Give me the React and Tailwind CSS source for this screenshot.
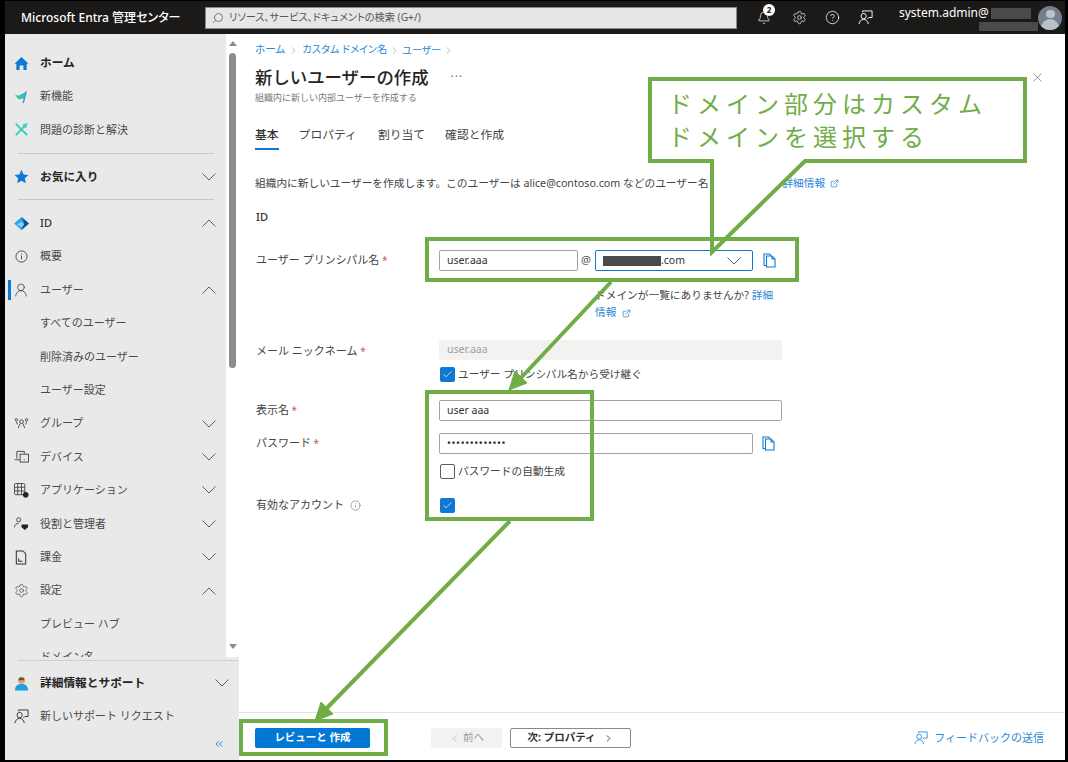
import React from "react";
import {Bell, Settings, CircleHelp, X, Check, Info, ExternalLink, UserRound, ChevronLeft, ChevronRight, ChevronsLeft, Search} from "lucide-react";

const Chevron = ({up}) => (
    <svg width="14" height="8" viewBox="0 0 14 8" fill="none" stroke="#605e5c" strokeWidth="1">
        <polyline points={up ? "0.5,7.5 7,1 13.5,7.5" : "0.5,0.5 7,7 13.5,0.5"}/>
    </svg>
);

const HomeIcon = () => (
    <svg width="15" height="15" viewBox="0 0 16 16"><path d="M8 1 15.5 8.2H13.5V15H10V10H6V15H2.5V8.2H.5Z" fill="#0f78d4"/></svg>
);
const NewIcon = () => (
    <svg width="14" height="14" viewBox="0 0 16 16">
        <path d="M1 5 5 6.5 14 2 11 10 5 10.5Z" fill="#32c8a8"/>
        <path d="M14 1.500 10.500 15" stroke="#2f8fe0" strokeWidth="1.500"/>
    </svg>
);
const ToolsIcon = () => (
    <svg width="15" height="15" viewBox="0 0 16 16" fill="none" stroke="#36d1bd" strokeWidth="2.200">
        <path d="M2 2 14 14"/>
        <path d="M14 1.500 2 14"/>
        <path d="M10 2.500 13 6"/>
    </svg>
);
const StarIcon = () => (
    <svg width="15" height="15" viewBox="0 0 16 16"><path d="M8 .8 10.200 5.800 15.500 6.300 11.500 9.900 12.700 15.200 8 12.400 3.300 15.200 4.500 9.900.5 6.300 5.800 5.800Z" fill="#0f78d4"/></svg>
);
const IdIcon = () => (
    <svg width="15" height="13" viewBox="0 0 16 14">
        <path d="M8 0 16 7 8 14 0 7Z" fill="#2aa5e8"/>
        <path d="M8 0 16 7 8 14 11 7Z" fill="#0a4d9e"/>
        <path d="M3 8 8 5 11 8 8 11Z" fill="#7fd4f5"/>
    </svg>
);
const InfoCircle = () => (
    <svg width="13" height="13" viewBox="0 0 14 14" fill="none" stroke="#444" strokeWidth="1">
        <circle cx="7" cy="7" r="6"/>
        <path d="M7 6v4M7 3.800v1" stroke="#a4262c"/>
    </svg>
);
const GroupIcon = () => (
    <svg width="15" height="13" viewBox="0 0 16 14" fill="none" stroke="#444" strokeWidth="1">
        <circle cx="8" cy="5" r="2"/>
        <circle cx="2.500" cy="3" r="1.300"/>
        <circle cx="13.500" cy="3" r="1.300"/>
        <path d="M4.500 12 6.500 7M11.500 12 9.500 7M2.500 5 3.500 8M13.500 5 12.500 8"/>
    </svg>
);
const DeviceIcon = () => (
    <svg width="15" height="13" viewBox="0 0 16 14" fill="none" stroke="#444" strokeWidth="1">
        <path d="M3 9V1.500H11V4"/>
        <path d="M.5 10.500H6"/>
        <rect x="6.500" y="4.500" width="9" height="8.500" fill="#e9e9e9"/>
        <path d="M10.500 10.500h1"/>
    </svg>
);
const AppsIcon = () => (
    <svg width="15" height="15" viewBox="0 0 16 16" fill="none" stroke="#444" strokeWidth="1">
        <rect x=".5" y=".5" width="11" height="12" rx="1.500"/>
        <path d="M4 .5v12M8 .5v12M.5 4.500h11M.5 8.500h11"/>
        <circle cx="12.500" cy="12.500" r="3" fill="#222" stroke="none"/>
    </svg>
);
const RoleIcon = () => (
    <svg width="15" height="14" viewBox="0 0 16 15" fill="none" stroke="#444" strokeWidth="1">
        <circle cx="5" cy="3" r="2.200"/>
        <path d="M.5 11c0-3 2-4 4.500-4"/>
        <path d="M8 8h7v3l-3.500 3L8 11Z" fill="#222" stroke="none"/>
    </svg>
);
const BillIcon = () => (
    <svg width="12" height="15" viewBox="0 0 12 16" fill="none" stroke="#333" strokeWidth="1.100">
        <path d="M1 1H8L11 4V15H1Z"/>
        <path d="M3.500 9v3h4"/>
    </svg>
);
const SupportIcon = () => (
    <svg width="15" height="15" viewBox="0 0 16 16">
        <circle cx="8" cy="4.500" r="3.800" fill="#e8a25a"/>
        <path d="M1 15.500c0-5 3-7 7-7s7 2 7 7Z" fill="#1ba1e2"/>
        <path d="M5 4.500a3 3 0 0 1 6 0Z" fill="#555"/>
    </svg>
);
const FeedbackIcon = ({color, size}) => (
    <svg width={size} height={size} viewBox="0 0 16 16" fill="none" stroke={color} strokeWidth="1">
        <circle cx="6" cy="6.500" r="2.800"/>
        <path d="M1 15c.5-3 2.500-5 5-5s4.500 2 5 5"/>
        <path d="M5 2.500V1H15V8H11.500L10 9.500"/>
    </svg>
);
const CopyIcon = () => (
    <svg width="13" height="15" viewBox="0 0 13 15" fill="none" stroke="#0f78d4" strokeWidth="1.100">
        <path d="M3.500 12.500H1V1H6.500L8 2.500"/>
        <path d="M3.500 3H9L12 6V14H3.500Z" fill="#fff"/>
        <path d="M9 3V6H12"/>
    </svg>
);

const topItems = [
    {label: "ホーム", icon: <HomeIcon/>, bold: true},
    {label: "新機能", icon: <NewIcon/>},
    {label: "問題の診断と解決", icon: <ToolsIcon/>},
    {divider: true},
    {label: "お気に入り", icon: <StarIcon/>, bold: true, chevron: "down"},
    {divider: true},
    {label: "ID", icon: <IdIcon/>, chevron: "up", strong: true},
    {label: "概要", icon: <InfoCircle/>},
    {label: "ユーザー", icon: <UserRound size={16} strokeWidth={1.1} color="#333"/>, chevron: "up", active: true},
    {label: "すべてのユーザー"},
    {label: "削除済みのユーザー"},
    {label: "ユーザー設定"},
    {label: "グループ", icon: <GroupIcon/>, chevron: "down"},
    {label: "デバイス", icon: <DeviceIcon/>, chevron: "down"},
    {label: "アプリケーション", icon: <AppsIcon/>, chevron: "down"},
    {label: "役割と管理者", icon: <RoleIcon/>, chevron: "down"},
    {label: "課金", icon: <BillIcon/>, chevron: "down"},
    {label: "設定", icon: <Settings size={15} strokeWidth={1} color="#333"/>, chevron: "up"},
    {label: "プレビュー ハブ"},
    {label: "ドメイン名"},
];

const NavRow = ({item}) => (
    <div className="flex items-center h-[33.4px] shrink-0 pl-[3px]">
        <div className={`w-[3px] h-[20px] ${item.active ? "bg-[#0f78d4]" : ""}`}/>
        <div className="w-[16px] ml-[2px] flex justify-center items-center">{item.icon}</div>
        <span className={`ml-[11px] whitespace-nowrap ${item.bold ? "text-[11.7px] font-bold text-[#252423]" : item.strong ? "text-[11px] font-medium text-[#323130]" : "text-[11px] text-[#4a4a4a]"}`}>
            {item.label}
        </span>
        {item.chevron && <div className="ml-auto mr-[10px] flex"><Chevron up={item.chevron === "up"}/></div>}
    </div>
);

const Sidebar = () => (
    <aside className="w-[234px] shrink-0 flex flex-col bg-[#e9e9e9]">
        <div className="flex h-[623px] shrink-0">
            <div className="w-[221px] pt-[12.5px] overflow-hidden flex flex-col">
                {topItems.map((item, i) =>
                    item.divider
                        ? <div key={i} className="h-[13.25px] shrink-0 flex items-center pl-[13px] pr-[12px]"><div className="h-px w-full bg-[#c8c8c8]"/></div>
                        : <NavRow key={i} item={item}/>
                )}
            </div>
            <div className="w-[13px] bg-white flex flex-col items-center">
                <div className="mt-[7px] w-0 h-0 border-x-[4px] border-x-transparent border-b-[5px] border-b-[#8c8c8c]"/>
                <div className="mt-[7px] w-[7px] h-[315px] rounded-[4px] bg-[#8c8c8c]"/>
                <div className="mt-auto mb-[8px] w-0 h-0 border-x-[4px] border-x-transparent border-t-[5px] border-t-[#8c8c8c]"/>
            </div>
        </div>
        <div className="flex-1 flex flex-col">
            <div className="mt-[3px] ml-[13px] mr-px h-px bg-[#cfcfcf]"/>
            <div className="mt-[5.5px] flex items-center h-[33.4px] pl-[6px]">
                <div className="w-[20px] flex justify-center"><SupportIcon/></div>
                <span className="ml-[9px] text-[11.7px] font-bold text-[#252423]">詳細情報とサポート</span>
                <div className="ml-auto mr-[10px] flex"><Chevron/></div>
            </div>
            <div className="flex items-center h-[33.4px] pl-[6px]">
                <div className="w-[20px] flex justify-center"><FeedbackIcon color="#333" size={15}/></div>
                <span className="ml-[9px] text-[11px] text-[#4a4a4a]">新しいサポート リクエスト</span>
            </div>
            <div className="mt-[5px] mr-[14px] flex justify-end">
                <ChevronsLeft size={12} strokeWidth={1.8} color="#0f78d4"/>
            </div>
        </div>
    </aside>
);

const Header = () => (
    <header className="h-[33px] shrink-0 bg-[#1b1a19] flex items-center">
        <span className="ml-[16px] w-[184px] text-[12px] font-medium text-white whitespace-nowrap [font-feature-settings:'palt']">Microsoft Entra 管理センター</span>
        <div className="w-[532px] h-[22px] bg-[#e6e6e6] border border-[#8a8a8a] flex items-center pl-[6px]">
            <Search size={12} strokeWidth={1.3} color="#444" className="-scale-x-100"/>
            <span className="ml-[5px] text-[10.2px] text-[#555] [font-feature-settings:'palt']">リソース、サービス、ドキュメントの検索 (G+/)</span>
        </div>
        <div className="ml-[20px] w-[14px] relative flex">
            <Bell size={14} strokeWidth={1.2} color="#fff"/>
            <div className="absolute -top-[7px] left-[6px] w-[12px] h-[12px] rounded-full bg-white text-[8px] font-bold leading-[12px] text-center text-[#222]">2</div>
        </div>
        <Settings size={15} strokeWidth={1.1} color="#fff" className="ml-[21px]"/>
        <CircleHelp size={15} strokeWidth={1.2} color="#fff" className="ml-[18px]"/>
        <div className="ml-[18px] flex"><FeedbackIcon color="#fff" size={15}/></div>
        <div className="ml-[26px] w-[139px] h-full flex flex-col">
            <div className="mt-[5px] flex h-[14px] items-center">
                <span className="text-[12px] text-white leading-[14px] whitespace-nowrap">system.admin@</span>
                <div className="ml-[2px] w-[40px] h-[11px] bg-[#4a4a4a]"/>
            </div>
            <div className="mt-[2px] ml-[80px] w-[59px] h-[9px] bg-[#4a4a4a]"/>
        </div>
        <div className="w-[24px] h-[24px] rounded-full bg-[#73808c] overflow-hidden flex flex-col items-center">
            <div className="mt-[4px] w-[9px] h-[9px] rounded-full bg-[#b9c2c9]"/>
            <div className="mt-[1px] w-[18px] h-[12px] rounded-t-full bg-[#b9c2c9]"/>
        </div>
    </header>
);

const Label = ({children, star, className}) => (
    <div className={`w-[183px] shrink-0 text-[11px] text-[#444] ${className || ""}`}>
        {children}{star && <span className="text-[#c4605f] text-[10px]"> *</span>}
    </div>
);

const Input = ({value, className}) => (
    <div className={`h-[21px] border-[1.5px] border-[#a3a3a3] rounded-[2px] flex items-center pl-[7px] text-[10.5px] text-[#323130] ${className}`}>{value}</div>
);

const Checkbox = ({checked}) => (
    <div className={`w-[15px] h-[15px] shrink-0 rounded-[2px] flex items-center justify-center ${checked ? "bg-[#0f78d4]" : "border-[1.5px] border-[#605e5c]"}`}>
        {checked && <Check size={11} strokeWidth={1.5} color="#fff"/>}
    </div>
);

const Overlay = () => (
    <>
        <svg className="absolute inset-0 pointer-events-none" width="1068" height="762" viewBox="0 0 1068 762" fill="none" stroke="#70ad47" strokeWidth="4">
            <path d="M650 79H1025V161H805L712 252V161H650Z" fill="#fff"/>
            <rect x="427" y="239" width="370" height="41"/>
            <rect x="427" y="392" width="165" height="127"/>
            <rect x="241" y="721" width="145" height="33"/>
            <path d="M611 282 518 381"/>
            <path d="M509 390 527 383 515 371Z" fill="#70ad47" strokeWidth="1"/>
            <path d="M510 521 324 711"/>
            <path d="M315 721 333 714 321 702Z" fill="#70ad47" strokeWidth="1"/>
        </svg>
        <div className="absolute left-[668px] top-[87px] text-[24px] leading-[33px] tracking-[5px] font-normal text-[#70ad47] whitespace-nowrap">
            <div>ドメイン部分はカスタム</div>
            <div>ドメインを選択する</div>
        </div>
    </>
);

const Main = () => (
    <main className="flex-1 bg-white flex flex-col min-w-0">
        <div className="flex-1 pl-[16px] pr-[20px] pt-[8px] min-h-0">
            <div className="flex items-center h-[16px] text-[10.6px] text-[#2b88d8] whitespace-nowrap [font-feature-settings:'palt']">
                <span>ホーム</span>
                <ChevronRight size={11} strokeWidth={1.1} color="#777" className="mx-[3px]"/>
                <span className="text-[10.2px]">カスタム ドメイン名</span>
                <ChevronRight size={11} strokeWidth={1.1} color="#777" className="mx-[2px]"/>
                <span className="text-[10px]">ユーザー</span>
                <ChevronRight size={11} strokeWidth={1.1} color="#777" className="mx-[2px]"/>
            </div>
            <div className="mt-[6px] flex items-center h-[26px]">
                <span className="text-[17.4px] font-medium text-[#252423] whitespace-nowrap">新しいユーザーの作成</span>
                <span className="ml-[22px] text-[12px] tracking-[1px] text-[#777]">···</span>
                <X size={15} strokeWidth={1} color="#555" className="ml-auto"/>
            </div>
            <div className="mt-[2px] h-[12px] text-[9px] leading-[12px] text-[#777] whitespace-nowrap">組織内に新しい内部ユーザーを作成する</div>
            <div className="mt-[22px] flex text-[11.8px] text-[#444] whitespace-nowrap">
                <div className="h-[24px] border-b-2 border-[#0f78d4] text-[#323130] font-medium">基本</div>
                <div className="ml-[20px]">プロパティ</div>
                <div className="ml-[21px]">割り当て</div>
                <div className="ml-[20px]">確認と作成</div>
            </div>
            <div className="mt-[25px] h-[16px] flex items-center text-[10.7px] text-[#444] whitespace-nowrap">
                <span>組織内に新しいユーザーを作成します。このユーザーは alice@contoso.com などのユーザー名</span>
                <span className="ml-[74px] text-[#2b88d8]">詳細情報</span>
                <ExternalLink size={9} color="#2b88d8" className="ml-[5px]"/>
            </div>
            <div className="mt-[18px] ml-px h-[16px] text-[11px] font-medium text-[#323130]">ID</div>
            <div className="mt-[25px] ml-px flex flex-col">
                <div className="flex items-center h-[21px]">
                    <Label star>ユーザー プリンシパル名</Label>
                    <Input value="user.aaa" className="w-[139px]"/>
                    <span className="ml-[3px] w-[14px] text-[11px] text-[#555]">@</span>
                    <div className="w-[158px] h-[21px] border-[1.5px] border-[#0f78d4] rounded-[2px] flex items-center pl-[7px] pr-[11px] text-[10.5px] text-[#323130]">
                        <div className="w-[58px] h-[10px] bg-[#4a4a4a]"/>
                        <span>.com</span>
                        <div className="ml-auto flex"><Chevron/></div>
                    </div>
                    <div className="ml-[10px] flex"><CopyIcon/></div>
                </div>
                <div className="mt-[16px] ml-[339px] w-[183px] text-[10.7px] leading-[17px] text-[#444]">
                    ドメインが一覧にありませんか? <span className="text-[#2b88d8]">詳細情報</span>
                    <ExternalLink size={9} color="#2b88d8" className="inline ml-[6px]"/>
                </div>
                <div className="mt-[18px] flex items-center h-[21px]">
                    <Label star className="pt-[4px]">メール ニックネーム</Label>
                    <div className="w-[343px] h-[20px] bg-[#f3f2f1] rounded-[2px] flex items-center pl-[8px] text-[10.5px] text-[#a19f9d]">user.aaa</div>
                </div>
                <div className="mt-[6px] ml-[184px] flex items-center h-[16px] gap-[3px] text-[10.7px] text-[#444]">
                    <Checkbox checked/>
                    <span>ユーザー プリンシパル名から受け継ぐ</span>
                </div>
                <div className="mt-[18px] flex items-center h-[21px]">
                    <Label star>表示名</Label>
                    <Input value="user aaa" className="w-[343px]"/>
                </div>
                <div className="mt-[12px] flex items-center h-[21px]">
                    <Label star>パスワード</Label>
                    <Input value="•••••••••••••" className="w-[314px] tracking-[0.6px] text-[#222]"/>
                    <div className="ml-[9px] flex"><CopyIcon/></div>
                </div>
                <div className="mt-[9px] ml-[184px] flex items-center h-[16px] gap-[3px] text-[10.7px] text-[#444]">
                    <Checkbox/>
                    <span>パスワードの自動生成</span>
                </div>
                <div className="mt-[18px] flex items-start h-[20px]">
                    <div className="w-[184px] shrink-0 flex items-center text-[11px] text-[#444]">
                        有効なアカウント
                        <div className="ml-[6px] flex"><Info size={11} strokeWidth={1} color="#444"/></div>
                    </div>
                    <div className="mt-[1px]"><Checkbox checked/></div>
                </div>
            </div>
        </div>
        <footer className="h-[48px] shrink-0 border-t border-[#e1e1e1] flex items-start pt-[15px] pl-[16px] pr-[21px]">
            <div className="w-[115px] h-[20px] rounded-[2px] bg-[#0078d4] text-white text-[10.5px] font-bold flex items-center justify-center">レビューと 作成</div>
            <div className="ml-[61px] w-[71px] h-[20px] rounded-[2px] bg-[#f3f2f1] text-[#a19f9d] text-[10.5px] flex items-center justify-center gap-[3px]">
                <ChevronLeft size={11} strokeWidth={1.3}/>前へ
            </div>
            <div className="ml-[8px] w-[121px] h-[20px] rounded-[2px] border border-[#8a8886] text-[#323130] text-[10.5px] font-bold flex items-center justify-center gap-[7px]">
                次: プロパティ<ChevronRight size={11} strokeWidth={1.8}/>
            </div>
            <div className="ml-auto flex items-center h-[20px] text-[11px] text-[#2b88d8] gap-[6px] whitespace-nowrap">
                <FeedbackIcon color="#2b88d8" size={14}/>
                フィードバックの送信
            </div>
        </footer>
    </main>
);

export default function App() {
    return (
        <div className="relative w-[1068px] h-[762px] bg-black pl-[5px] pr-[3px] pt-px pb-[2px] flex flex-col overflow-hidden font-['Noto_Sans','Noto_Sans_CJK_JP',sans-serif]">
            <Header/>
            <div className="flex-1 flex min-h-0">
                <Sidebar/>
                <Main/>
            </div>
            <Overlay/>
        </div>
    );
}
